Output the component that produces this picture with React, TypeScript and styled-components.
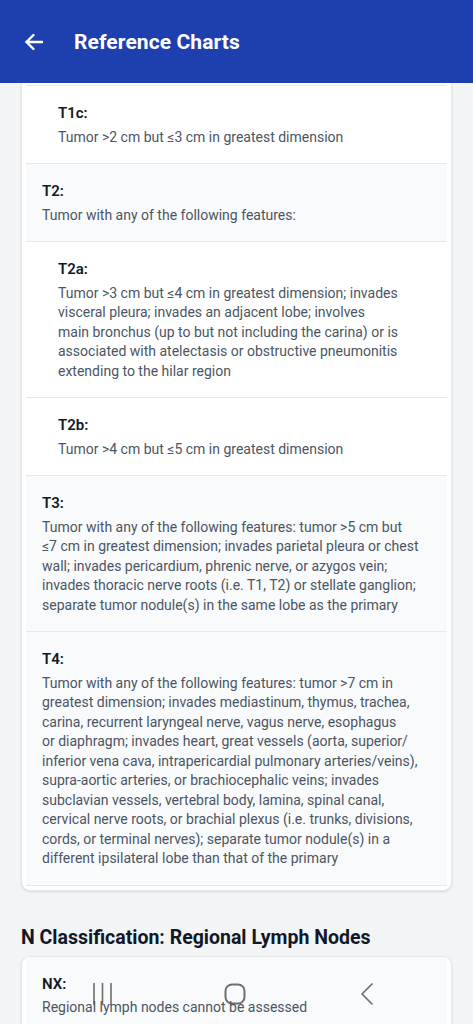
import React from "react";
import styled, { createGlobalStyle } from "styled-components";

const GlobalStyle = createGlobalStyle`
  html, body { margin: 0; padding: 0; height: 100%; }
  body {
    font-family: Roboto, "Noto Sans", "Liberation Sans", sans-serif;
    background: #f3f4f6;
    -webkit-font-smoothing: antialiased;
  }
  #root { height: 100%; }
  * { box-sizing: border-box; }
`;

const Page = styled.div`
  display: flex;
  flex-direction: column;
  height: 100vh;
  background: #f3f4f6;
  overflow: hidden;
`;

const Header = styled.header`
  flex: 0 0 83px;
  display: flex;
  align-items: center;
  padding: 0 0 0 22px;
  background: #1e40af;
  color: #fff;
  z-index: 2;
`;

const BackButton = styled.button`
  display: flex;
  align-items: center;
  justify-content: center;
  width: 24px;
  height: 24px;
  padding: 0;
  margin: 0 28px 0 0;
  border: none;
  background: transparent;
  color: #fff;
`;

const Title = styled.h1`
  margin: 0;
  font-size: 21px;
  font-weight: 700;
  letter-spacing: 0.1px;
`;

const Content = styled.main`
  flex: 1;
  overflow: hidden;
  padding: 0 21px 40px 21px;
`;

const SectionHeading = styled.h2`
  margin: 33px 0 4px 0;
  font-size: 19.5px;
  line-height: 28px;
  font-weight: 700;
  color: #111827;
`;

const Card = styled.section<{ $continued?: boolean }>`
  background: #fff;
  border: 1px solid #e5e7eb;
  border-top: ${(p) => (p.$continued ? "none" : "1px solid #e5e7eb")};
  border-radius: ${(p) => (p.$continued ? "0 0 9px 9px" : "9px")};
  box-shadow: 0 1px 3px rgba(0, 0, 0, 0.08), 0 1px 2px rgba(0, 0, 0, 0.04);
  padding: ${(p) => (p.$continued ? "2px 4px 4px 4px" : "0 4px 4px 4px")};
`;

const Row = styled.div<{ $nested?: boolean; $ruleTop?: boolean }>`
  display: flex;
  flex-direction: column;
  background: ${(p) => (p.$nested ? "#ffffff" : "#f9fafb")};
  border-top: ${(p) => (p.$ruleTop ? "1px solid #e5e7eb" : "none")};
  border-bottom: 1px solid #e5e7eb;
  padding: ${(p) => (p.$nested ? "16px 16px 16px 32px" : "16px 16px 16px 16px")};
`;

const Code = styled.div`
  font-size: 15px;
  line-height: 22.5px;
  font-weight: 600;
  color: #111827;
  margin-bottom: 3px;
`;

const Desc = styled.p`
  margin: 0;
  font-size: 14px;
  line-height: 19.5px;
  color: #4b5563;
  white-space: pre-line;
`;

const NavBar = styled.div`
  position: fixed;
  left: 0;
  right: 0;
  bottom: 0;
  height: 44px;
  display: grid;
  grid-template-columns: repeat(3, 132px);
  justify-content: center;
  justify-items: center;
  align-items: center;
  padding: 0 3px 16px 0;
  pointer-events: none;
  color: rgba(85, 85, 85, 0.85);
  z-index: 5;
`;

type Item = { code: string; desc: string; nested?: boolean };

const tItems: Item[] = [
  { code: "T1c:", desc: "Tumor >2 cm but ≤3 cm in greatest dimension", nested: true },
  { code: "T2:", desc: "Tumor with any of the following features:" },
  { code: "T2a:", desc: "Tumor >3 cm but ≤4 cm in greatest dimension; invades visceral pleura; invades an adjacent lobe; involves\nmain bronchus (up to but not including the carina) or is associated with atelectasis or obstructive pneumonitis extending to the hilar region", nested: true },
  { code: "T2b:", desc: "Tumor >4 cm but ≤5 cm in greatest dimension", nested: true },
  { code: "T3:", desc: "Tumor with any of the following features: tumor >5 cm but\n≤7 cm in greatest dimension; invades parietal pleura or chest wall; invades pericardium, phrenic nerve, or azygos vein; invades thoracic nerve roots (i.e. T1, T2) or stellate ganglion; separate tumor nodule(s) in the same lobe as the primary" },
  { code: "T4:", desc: "Tumor with any of the following features: tumor >7 cm in greatest dimension; invades mediastinum, thymus, trachea, carina, recurrent laryngeal nerve, vagus nerve, esophagus\nor diaphragm; invades heart, great vessels (aorta, superior/\ninferior vena cava, intrapericardial pulmonary arteries/veins), supra-aortic arteries, or brachiocephalic veins; invades subclavian vessels, vertebral body, lamina, spinal canal, cervical nerve roots, or brachial plexus (i.e. trunks, divisions, cords, or terminal nerves); separate tumor nodule(s) in a different ipsilateral lobe than that of the primary" },
];

const nItems: Item[] = [
  { code: "NX:", desc: "Regional lymph nodes cannot be assessed" },
];

export default function App() {
  return (
    <>
      <GlobalStyle />
      <Page>
        <Header>
          <BackButton aria-label="Back">
            <svg width="24" height="24" viewBox="0 0 24 24" fill="none" stroke="currentColor" strokeWidth="2.4" strokeLinecap="round" strokeLinejoin="round">
              <path d="M20 12H4.5" />
              <path d="M11.5 5L4.5 12L11.5 19" />
            </svg>
          </BackButton>
          <Title>Reference Charts</Title>
        </Header>
        <Content>
          <Card $continued>
            {tItems.map((it, i) => (
              <Row key={it.code} $nested={it.nested} $ruleTop={i === 0}>
                <Code>{it.code}</Code>
                <Desc>{it.desc}</Desc>
              </Row>
            ))}
          </Card>
          <SectionHeading>N Classification: Regional Lymph Nodes</SectionHeading>
          <Card>
            {nItems.map((it) => (
              <Row key={it.code} $nested={it.nested}>
                <Code>{it.code}</Code>
                <Desc>{it.desc}</Desc>
              </Row>
            ))}
          </Card>
        </Content>
        <NavBar>
          <svg width="22" height="24" viewBox="0 0 22 24" fill="none" stroke="currentColor" strokeWidth="1.6">
            <path d="M2 1V23M10.5 1V23M19 1V23" />
          </svg>
          <svg width="24" height="24" viewBox="0 0 24 24" fill="none" stroke="currentColor" strokeWidth="2">
            <rect x="2.5" y="2.5" width="19" height="19" rx="6.5" />
          </svg>
          <svg width="16" height="24" viewBox="0 0 16 24" fill="none" stroke="currentColor" strokeWidth="1.7" strokeLinecap="round" strokeLinejoin="round">
            <path d="M13 2L3 12L13 22" />
          </svg>
        </NavBar>
      </Page>
    </>
  );
}
